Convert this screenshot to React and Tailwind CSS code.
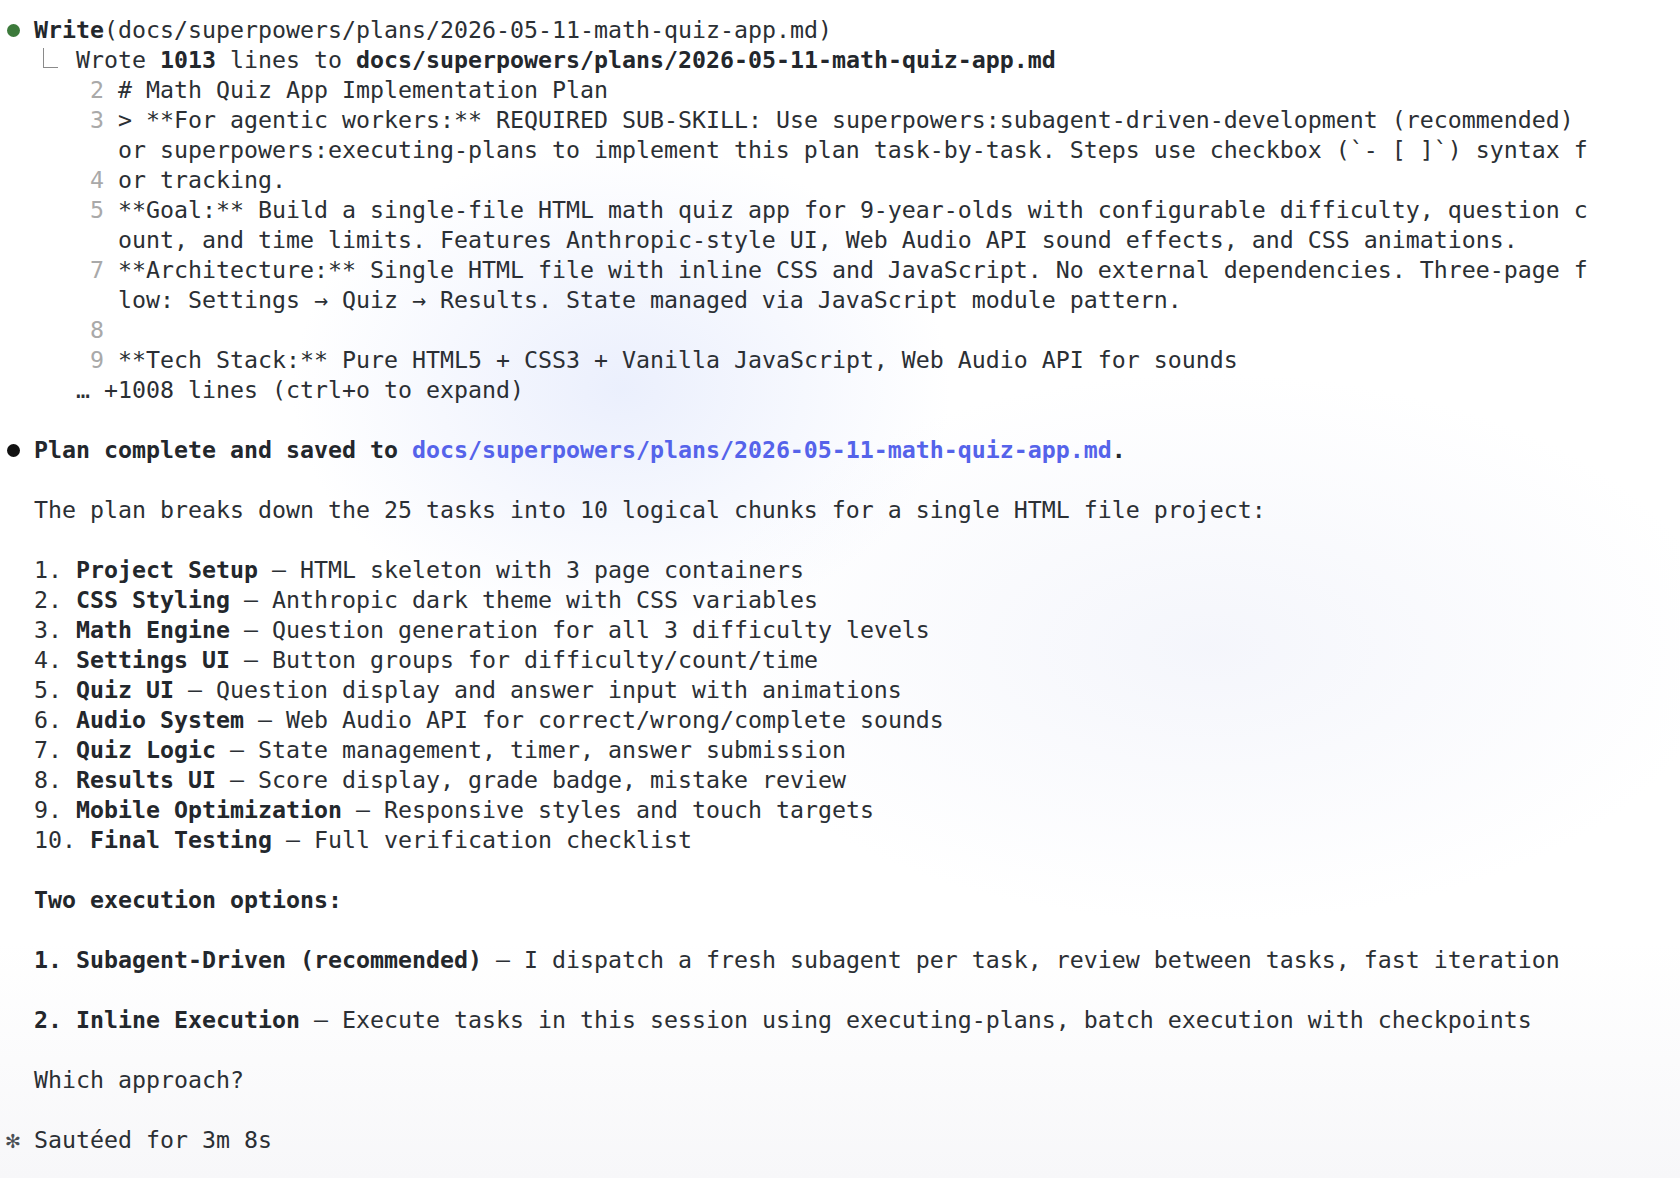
const planPath = "docs/superpowers/plans/2026-05-11-math-quiz-app.md";

function Dot({ className }) {
  return (
    <span className="inline-flex w-[14px] h-[30px] items-center justify-center align-top">
      <span className={"block w-[13px] h-[13px] rounded-full " + className} />
    </span>
  );
}

function Elbow() {
  return (
    <span className="inline-block w-[14px] h-[30px] align-top">
      <span className="block mt-[3px] ml-[9px] w-[15px] h-[20px] border-l-[1.5px] border-b-[1.5px] border-[#8a8a8a]" />
    </span>
  );
}

function Line({ children }) {
  return <div className="h-[30px] leading-[30px] whitespace-pre">{children}</div>;
}

function Num({ n }) {
  return (
    <>
      {"      "}
      <span className="text-[#a9a9a9]">{n}</span>
      {" "}
    </>
  );
}

const tasks = [
  ["Project Setup", "HTML skeleton with 3 page containers"],
  ["CSS Styling", "Anthropic dark theme with CSS variables"],
  ["Math Engine", "Question generation for all 3 difficulty levels"],
  ["Settings UI", "Button groups for difficulty/count/time"],
  ["Quiz UI", "Question display and answer input with animations"],
  ["Audio System", "Web Audio API for correct/wrong/complete sounds"],
  ["Quiz Logic", "State management, timer, answer submission"],
  ["Results UI", "Score display, grade badge, mistake review"],
  ["Mobile Optimization", "Responsive styles and touch targets"],
  ["Final Testing", "Full verification checklist"],
];

export default function App() {
  return (
    <div
      className="min-h-screen w-full bg-white bg-[radial-gradient(ellipse_at_37%_33%,rgba(228,234,252,0.75),transparent_22%),radial-gradient(ellipse_at_72%_55%,rgba(240,242,250,0.7),transparent_30%),linear-gradient(180deg,#ffffff_0%,#ffffff_80%,#f7f7f9_100%)] text-[#2b2f34] text-[23.25px]"
      style={{ fontFamily: '"DejaVu Sans Mono", "Liberation Mono", monospace' }}
    >
      <div className="pl-[6px] pt-[15px] flex flex-col">
        <Line>
          <Dot className="bg-[#3c7a3b]" />
          {" "}
          <span className="font-bold text-[#23272c]">Write</span>
          {"(" + planPath + ")"}
        </Line>
        <Line>
          {"  "}
          <Elbow />
          {"  Wrote "}
          <span className="font-bold text-[#23272c]">1013</span>
          {" lines to "}
          <span className="font-bold text-[#23272c]">{planPath}</span>
        </Line>
        <Line>
          <Num n="2" />
          # Math Quiz App Implementation Plan
        </Line>
        <Line>
          <Num n="3" />
          {"> **For agentic workers:** REQUIRED SUB-SKILL: Use superpowers:subagent-driven-development (recommended)"}
        </Line>
        <Line>{"        or superpowers:executing-plans to implement this plan task-by-task. Steps use checkbox (`- [ ]`) syntax f"}</Line>
        <Line>
          <Num n="4" />
          or tracking.
        </Line>
        <Line>
          <Num n="5" />
          {"**Goal:** Build a single-file HTML math quiz app for 9-year-olds with configurable difficulty, question c"}
        </Line>
        <Line>{"        ount, and time limits. Features Anthropic-style UI, Web Audio API sound effects, and CSS animations."}</Line>
        <Line>
          <Num n="7" />
          {"**Architecture:** Single HTML file with inline CSS and JavaScript. No external dependencies. Three-page f"}
        </Line>
        <Line>{"        low: Settings → Quiz → Results. State managed via JavaScript module pattern."}</Line>
        <Line>
          <Num n="8" />
        </Line>
        <Line>
          <Num n="9" />
          {"**Tech Stack:** Pure HTML5 + CSS3 + Vanilla JavaScript, Web Audio API for sounds"}
        </Line>
        <Line>{"     … +1008 lines (ctrl+o to expand)"}</Line>
        <Line>{" "}</Line>

        <Line>
          <Dot className="bg-[#111111]" />
          {" "}
          <span className="font-bold text-[#23272c]">Plan complete and saved to </span>
          <span className="font-bold text-[#5563ea]">{planPath}</span>
          <span className="font-bold text-[#23272c]">.</span>
        </Line>
        <Line>{" "}</Line>
        <Line>{"  The plan breaks down the 25 tasks into 10 logical chunks for a single HTML file project:"}</Line>
        <Line>{" "}</Line>
        {tasks.map(([title, desc], i) => (
          <Line key={title}>
            {"  " + (i + 1) + ". "}
            <span className="font-bold text-[#23272c]">{title}</span>
            {" – " + desc}
          </Line>
        ))}
        <Line>{" "}</Line>
        <Line>
          {"  "}
          <span className="font-bold text-[#23272c]">Two execution options:</span>
        </Line>
        <Line>{" "}</Line>
        <Line>
          {"  "}
          <span className="font-bold text-[#23272c]">1. Subagent-Driven (recommended)</span>
          {" – I dispatch a fresh subagent per task, review between tasks, fast iteration"}
        </Line>
        <Line>{" "}</Line>
        <Line>
          {"  "}
          <span className="font-bold text-[#23272c]">2. Inline Execution</span>
          {" – Execute tasks in this session using executing-plans, batch execution with checkpoints"}
        </Line>
        <Line>{" "}</Line>
        <Line>{"  Which approach?"}</Line>
        <Line>{" "}</Line>
        <Line>
          <span className="font-bold text-[#4a4f55]">{"✻"}</span>
          {" Sautéed for 3m 8s"}
        </Line>
      </div>
    </div>
  );
}
